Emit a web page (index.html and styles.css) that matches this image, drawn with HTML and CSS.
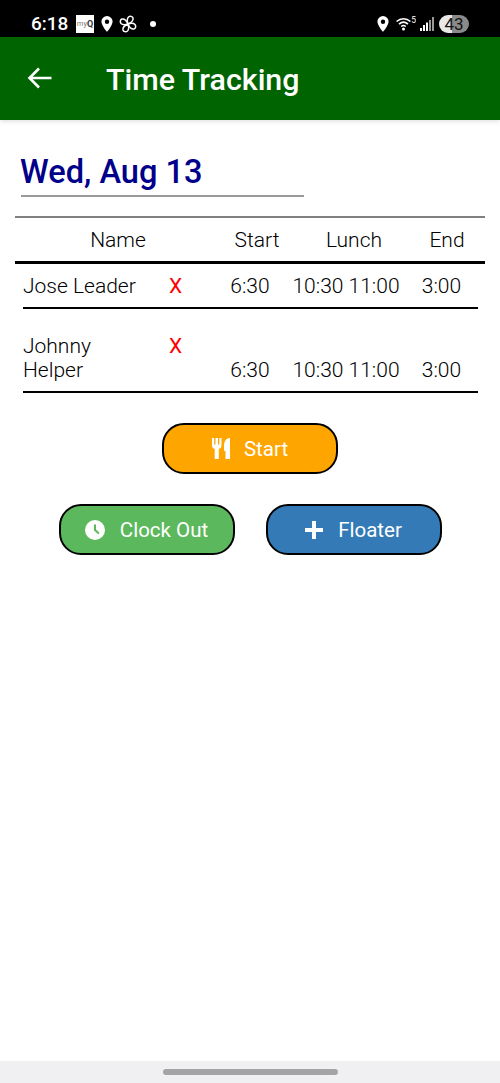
FILE: index.html
```html
<!DOCTYPE html>
<html lang="en">
<head>
<meta charset="utf-8">
<title>Time Tracking</title>
<link rel="stylesheet" href="styles.css">
</head>
<body>
<div class="screen">
  <div class="status">
    <div class="status-left">
      <span class="clock">6:18</span>
      <span class="myq"><span class="myq-my">my</span><span class="myq-q">Q</span></span>
      <svg class="pin" viewBox="0 0 12 16"><path fill-rule="evenodd" fill="#fff" d="M6 0a5.600 5.600 0 0 0-5.600 5.600C.4 9.600 6 16 6 16s5.600-6.400 5.600-10.400A5.600 5.600 0 0 0 6 0zm0 3.600a2.200 2.200 0 1 1 0 4.400 2.200 2.200 0 0 1 0-4.400z"/></svg>
      <svg class="fan" viewBox="0 0 18 18"><g fill="none" stroke="#fff" stroke-width="1.500"><path d="M9 9C8 6 8 3.500 9.500 2c1.500-1.200 4-.8 4.500 1 .4 2-1.500 4.500-5 6z"/><path d="M9 9c3-1 5.500-1 7 .5 1.200 1.500.8 4-1 4.500-2 .4-4.500-1.500-6-5z"/><path d="M9 9c1 3 1 5.500-.5 7-1.500 1.200-4 .8-4.500-1-.4-2 1.500-4.500 5-6z"/><path d="M9 9c-3 1-5.500 1-7-.5C.8 7 1.200 4.500 3 4c2-.4 4.500 1.500 6 5z"/></g></svg>
      <span class="dot"></span>
    </div>
    <div class="status-right">
      <svg class="pin" viewBox="0 0 12 16"><path fill-rule="evenodd" fill="#fff" d="M6 0a5.600 5.600 0 0 0-5.600 5.600C.4 9.600 6 16 6 16s5.600-6.400 5.600-10.400A5.600 5.600 0 0 0 6 0zm0 3.600a2.200 2.200 0 1 1 0 4.400 2.200 2.200 0 0 1 0-4.400z"/></svg>
      <svg class="wifi" viewBox="0 0 20 15"><g fill="none" stroke="#fff" stroke-width="1.600"><path d="M.6 5.500C4.600 1.800 10.400 1.800 14.400 5.500"/><path d="M3 8.100C5.800 5.700 9.200 5.700 12 8.100"/><path d="M5.200 10.500C6.600 9.300 8.400 9.300 9.800 10.500"/></g><circle cx="7.500" cy="13" r="1.500" fill="#fff"/><text x="15.200" y="6.500" class="wifi-5">5</text></svg>
      <svg class="signal" viewBox="0 0 14 14"><path fill="#fff" d="M0 11h2v3H0zM3 8h2v6H3zM6 5.500h2V14H6z"/><path fill="#999" d="M9 3h2v11H9zM12 0h2v14h-2z"/></svg>
      <span class="battery">43</span>
    </div>
  </div>
  <header class="appbar">
    <svg class="back" viewBox="0 0 26 24"><path d="M24.500 12H3M12 2.500 2.500 12l9.500 9.500" fill="none" stroke="#fff" stroke-width="2.600"/></svg>
    <h1 class="title">Time Tracking</h1>
  </header>
  <main class="content">
    <div class="date">Wed, Aug 13</div>
    <div class="table">
      <div class="thead">
        <span>Name</span>
        <span>Start</span>
        <span>Lunch</span>
        <span>End</span>
      </div>
      <div class="row">
        <span class="name">Jose Leader</span>
        <span class="x">X</span>
        <span class="cell">6:30</span>
        <span class="cell">10:30 11:00</span>
        <span class="cell">3:00</span>
      </div>
      <div class="row row-tall">
        <span class="name">Johnny Helper</span>
        <span class="x">X</span>
        <span class="cell">6:30</span>
        <span class="cell">10:30 11:00</span>
        <span class="cell">3:00</span>
      </div>
    </div>
    <div class="actions">
      <button class="btn btn-start">
        <svg class="ico ico-food" viewBox="0 0 18 21"><path fill="#fff" d="M0 0h2.200v6.500h1.300V0h2.500v6.500h1.300V0h2.200v7.500c0 1.800-1 3-2.700 3.400V21H2.700V10.900C1 10.500 0 9.300 0 7.500zM18 0v21h-4.500v-8H12V7.500C12 3 14.500 0 18 0z"/></svg>
        <span>Start</span>
      </button>
      <div class="btn-row">
        <button class="btn btn-clock">
          <svg class="ico ico-clock" viewBox="0 0 20 20"><circle cx="10" cy="10" r="10" fill="#fff"/><path d="M9 4.500h2v5l3.600 3.400-1.400 1.400L9 10.500z" fill="#5cb85c"/></svg>
          <span>Clock Out</span>
        </button>
        <button class="btn btn-floater">
          <svg class="ico ico-plus" viewBox="0 0 18 18"><path d="M7 0h4v7h7v4h-7v7H7v-7H0V7h7z" fill="#fff"/></svg>
          <span>Floater</span>
        </button>
      </div>
    </div>
  </main>
  <footer class="navbar"><span class="handle"></span></footer>
</div>
</body>
</html>
```

FILE: styles.css
```css
* { box-sizing: border-box; }
html, body { margin: 0; padding: 0; }
body { font-family: Roboto, "Liberation Sans", sans-serif; background: #fff; color: #000; }
.screen { width: 500px; height: 1083px; display: flex; flex-direction: column; overflow: hidden; }

.status { height: 37px; background: #000; color: #fff; display: flex; justify-content: space-between; align-items: center; padding: 10px 31px 0; flex: none; }
.status-left, .status-right { display: flex; align-items: center; }
.clock { font-size: 19px; font-weight: 500; width: 45px; }
.myq { width: 18px; height: 18px; background: #fff; display: flex; align-items: center; justify-content: center; color: #777; font-size: 7.500px; margin-right: 7px; }
.myq-q { font-weight: 700; font-size: 9px; color: #333; }
.pin { width: 12px; height: 16px; }
.fan { width: 18px; height: 18px; margin-left: 6px; }
.dot { width: 6px; height: 6px; border-radius: 50%; background: #fff; margin-left: 13px; }
.status-right .pin { margin-right: 7px; }
.wifi { width: 20px; height: 15px; margin-right: 4px; }
.wifi-5 { fill: #fff; font-size: 8.500px; font-family: Roboto, sans-serif; }
.signal { width: 14px; height: 14px; margin-right: 5px; }
.battery { width: 30px; height: 18px; border-radius: 9px; background: linear-gradient(90deg, #e8e8e8 0 43%, #8a8a8a 43% 100%); color: #111; font-size: 17px; display: flex; align-items: center; justify-content: center; }

.appbar { height: 83px; background: #006400; display: flex; align-items: center; padding: 0 0 0 27px; flex: none; box-shadow: 0 1px 5px rgba(0,0,0,.15); position: relative; }
.back { width: 26px; height: 24px; margin-bottom: 2px; }
.title { margin: 1px 0 0 53px; font-size: 30.400px; font-weight: 500; color: #fff; }

.content { flex: 1; padding: 0 15px; }
.date { margin: 31px 181px 0 6px; height: 46px; border-bottom: 2px solid #999; color: #00008b; font-size: 32.600px; font-weight: 500; line-height: 43px; text-indent: -1px; }

.table { margin-top: 19px; border-top: 2px solid #808080; }
.thead { height: 46px; border-bottom: 3px solid #000; display: grid; grid-template-columns: 206px 72px 122px 64px; align-items: center; font-size: 21px; font-weight: 300; text-align: center; }
.row { margin: 0 7px 0 8px; display: grid; grid-template-columns: 130px 60px 74px 118px 73px; border-bottom: 2px solid #000; font-size: 21px; font-weight: 300; line-height: 24px; height: 45px; padding-top: 10px; }
.row-tall { height: 84px; padding-top: 25px; }
.name { padding-right: 10px; }
.x { color: #f00; padding-left: 16px; font-weight: 400; }
.cell { text-align: center; }
.row-tall .cell { align-self: end; padding-bottom: 9px; box-sizing: content-box; }

.actions { display: flex; flex-direction: column; align-items: center; margin-top: 30px; }
.btn { width: 176px; height: 51px; border: 2px solid #000; border-radius: 22px; color: #fff; font-family: inherit; font-size: 20.500px; font-weight: 400; display: flex; align-items: center; justify-content: center; padding: 0; }
.btn-start { background: #ffa500; }
.btn-clock { background: #5cb85c; }
.btn-floater { background: #337ab7; }
.btn-row { display: flex; gap: 31px; margin-top: 30px; }
.ico { flex: none; }
.ico-food { width: 18px; height: 21px; margin-right: 14px; }
.ico-clock { width: 20px; height: 20px; margin-right: 15px; }
.ico-plus { width: 18px; height: 18px; margin-right: 15px; }

.navbar { height: 22px; background: #f0f0f2; display: flex; justify-content: center; align-items: center; flex: none; }
.handle { width: 175px; height: 6px; border-radius: 3px; background: #a4a4a6; }
```
